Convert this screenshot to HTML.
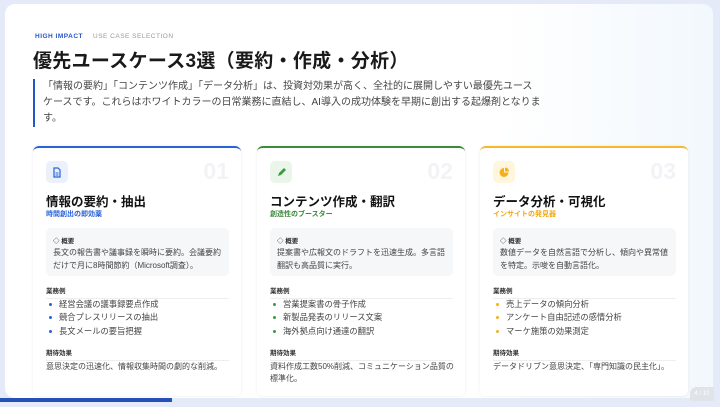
<!DOCTYPE html>
<html><head><meta charset="utf-8"><style>
*{margin:0;padding:0;box-sizing:border-box}
body{width:720px;height:407px;background:#e4eaf8;font-family:"Liberation Sans","Noto Sans CJK JP",sans-serif;position:relative;overflow:hidden;color:#222}
.panel{position:absolute;left:5px;top:4px;width:708px;height:394px;background:linear-gradient(90deg,#fff 0%,#fff 70%,#f2f8fd 100%);border-radius:10px}
.tag{position:absolute;left:35px;top:33px;font-size:6.5px;letter-spacing:.5px}
.tag b{color:#2456c8;margin-right:10px}
.tag span{color:#999}
h1{position:absolute;left:33px;top:46px;font-size:19px;font-weight:700;color:#1a1a1a;letter-spacing:.3px}
.lead{position:absolute;left:33px;top:79px;width:560px;white-space:nowrap;border-left:2px solid #2456c8;padding-left:8px;font-size:10px;line-height:16px;color:#444}
.card{position:absolute;top:146px;width:208px;height:250px;background:#fff;border-radius:6px;border-top:2px solid;box-shadow:0 0 3px rgba(0,0,0,.08)}
.ic{position:absolute;left:13px;top:13px;width:22px;height:22px;border-radius:5px;display:flex;align-items:center;justify-content:center}
.num{position:absolute;right:12px;top:10px;font-size:23px;font-weight:700;color:#f1f3f6}
.t{position:absolute;left:13px;top:43px;font-size:12.5px;font-weight:700;color:#111}
.st{position:absolute;left:13px;top:61px;font-size:7px;font-weight:700}
.box{position:absolute;left:13px;top:80px;width:183px;height:48px;background:#f6f7f9;border-radius:5px;padding:7px 7px}
.box .h{font-size:6.5px;font-weight:700;color:#333}
.box p{font-size:8px;line-height:13px;color:#444;margin-top:1px}
.sec{position:absolute;left:13px;width:183px;font-size:6.5px;font-weight:700;color:#333;border-bottom:1px solid #eee;padding-bottom:3px}
ul{position:absolute;left:13px;top:150px;list-style:none}
li{font-size:8.3px;line-height:13.3px;color:#444;padding-left:13px;position:relative}
li:before{content:"";position:absolute;left:3px;top:5px;width:3px;height:3px;border-radius:50%;background:#2a62d8}
ul.g li:before{background:#3d9a3d}ul.y li:before{background:#f5b020}
.eff{position:absolute;left:13px;top:213px;width:185px;font-size:8px;line-height:12px;color:#444}
.bar{position:absolute;left:0;top:398px;width:172px;height:4px;background:#2450b8}
.pg{position:absolute;left:690px;top:387px;width:24px;height:14px;background:#e0e3e8;border-radius:7px 0 0 0;font-size:6px;color:#fff;text-align:center;line-height:14px}
</style></head><body>
<div class="panel"></div>
<div class="tag"><b>HIGH IMPACT</b><span>USE CASE SELECTION</span></div>
<h1>優先ユースケース3選（要約・作成・分析）</h1>
<div class="lead">「情報の要約」「コンテンツ作成」「データ分析」は、投資対効果が高く、全社的に展開しやすい最優先ユース<br>ケースです。これらはホワイトカラーの日常業務に直結し、AI導入の成功体験を早期に創出する起爆剤となりま<br>す。</div>

<div class="card" style="left:33px;border-color:#2a62d8">
<div class="ic" style="background:#eaf1fd"><svg width="10" height="11" viewBox="0 0 10 11"><path d="M2 1h4l2 2v7H2z" fill="none" stroke="#2a62d8" stroke-width="1.2"/><path d="M3.5 6h3M3.5 8h3" stroke="#2a62d8"/></svg></div>
<div class="num">01</div><div class="t">情報の要約・抽出</div><div class="st" style="color:#2a62d8">時間創出の即効薬</div>
<div class="box"><div class="h">◇ 概要</div><p>長文の報告書や議事録を瞬時に要約。会議要約だけで月に8時間節約（Microsoft調査）。</p></div>
<div class="sec" style="top:137px">業務例</div>
<ul><li>経営会議の議事録要点作成</li><li>競合プレスリリースの抽出</li><li>長文メールの要旨把握</li></ul>
<div class="sec" style="top:199px">期待効果</div>
<div class="eff">意思決定の迅速化、情報収集時間の劇的な削減。</div>
</div>

<div class="card" style="left:257px;border-color:#3d8a3d">
<div class="ic" style="background:#ebf6ea"><svg width="11" height="11" viewBox="0 0 11 11"><path d="M2 9l1-3 5-5 2 2-5 5z" fill="#3d9a3d"/></svg></div>
<div class="num">02</div><div class="t">コンテンツ作成・翻訳</div><div class="st" style="color:#3d8a3d">創造性のブースター</div>
<div class="box"><div class="h">◇ 概要</div><p>提案書や広報文のドラフトを迅速生成。多言語翻訳も高品質に実行。</p></div>
<div class="sec" style="top:137px">業務例</div>
<ul class="g"><li>営業提案書の骨子作成</li><li>新製品発表のリリース文案</li><li>海外拠点向け通達の翻訳</li></ul>
<div class="sec" style="top:199px">期待効果</div>
<div class="eff">資料作成工数50%削減、コミュニケーション品質の標準化。</div>
</div>

<div class="card" style="left:480px;border-color:#f5b92a">
<div class="ic" style="background:#fff6dd"><svg width="11" height="11" viewBox="0 0 11 11"><path d="M5 1a4.5 4.5 0 1 0 4.5 4.5H5z" fill="#f5b020"/><path d="M6 0.5v4h4A4 4 0 0 0 6 .5z" fill="#f5b020"/></svg></div>
<div class="num">03</div><div class="t">データ分析・可視化</div><div class="st" style="color:#f0a818">インサイトの発見器</div>
<div class="box"><div class="h">◇ 概要</div><p>数値データを自然言語で分析し、傾向や異常値を特定。示唆を自動言語化。</p></div>
<div class="sec" style="top:137px">業務例</div>
<ul class="y"><li>売上データの傾向分析</li><li>アンケート自由記述の感情分析</li><li>マーケ施策の効果測定</li></ul>
<div class="sec" style="top:199px">期待効果</div>
<div class="eff">データドリブン意思決定、「専門知識の民主化」。</div>
</div>
<div class="bar"></div>
<div class="pg">4 / 10</div>
</body></html>
